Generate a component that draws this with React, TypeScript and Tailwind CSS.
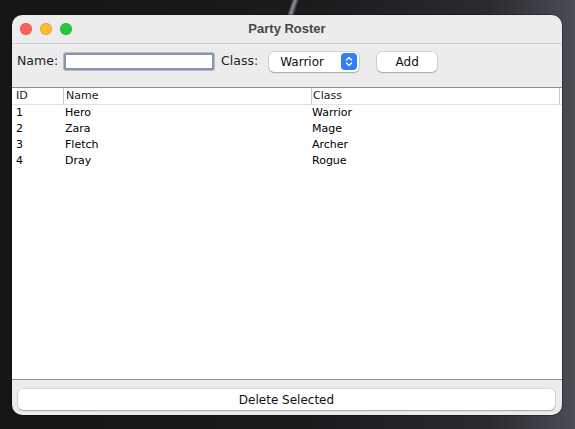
import React from "react";

type Member = {
	id: number;
	name: string;
	cls: string;
};

const MEMBERS: Member[] = [
	{ id: 1, name: "Hero", cls: "Warrior" },
	{ id: 2, name: "Zara", cls: "Mage" },
	{ id: 3, name: "Fletch", cls: "Archer" },
	{ id: 4, name: "Dray", cls: "Rogue" },
];

const SWING_FONT = { fontFamily: '"DejaVu Sans", "Noto Sans", sans-serif' };
const TITLE_FONT = { fontFamily: '"Liberation Sans", Arial, sans-serif' };

function TrafficLights() {
	return (
		<div className="flex items-center gap-[8px] pl-[8px]">
			<span className="block h-[12px] w-[12px] rounded-full bg-[#fe5f57] shadow-[inset_0_0_0_0.5px_rgba(0,0,0,0.2)]" />
			<span className="block h-[12px] w-[12px] rounded-full bg-[#febc2e] shadow-[inset_0_0_0_0.5px_rgba(0,0,0,0.2)]" />
			<span className="block h-[12px] w-[12px] rounded-full bg-[#28c840] shadow-[inset_0_0_0_0.5px_rgba(0,0,0,0.2)]" />
		</div>
	);
}

function ComboArrows() {
	return (
		<svg width="8" height="11" viewBox="0 0 8 11" fill="none">
			<path d="M1.5 4 L4 1.5 L6.5 4" stroke="white" strokeWidth="1.4" strokeLinecap="round" strokeLinejoin="round" />
			<path d="M1.5 7 L4 9.5 L6.5 7" stroke="white" strokeWidth="1.4" strokeLinecap="round" strokeLinejoin="round" />
		</svg>
	);
}

export default function App() {
	return (
		<div className="min-h-screen w-full pt-[15px] pl-[12px] pb-[14px] bg-no-repeat bg-[length:100%_15px,100%_100%] bg-[linear-gradient(108deg,transparent_50.3%,rgba(200,200,210,0.7)_50.9%,transparent_51.6%),linear-gradient(90deg,#151517_0%,#1b1b1e_55%,#2a2b30_85%,#4b4d55_100%)]">
			<div
				className="flex h-[400px] w-[550px] flex-col overflow-hidden rounded-[10px] bg-[#ececec] shadow-[0_0_0_0.5px_rgba(0,0,0,0.6)]"
				style={SWING_FONT}
			>
				{/* Title bar */}
				<div className="grid h-[29px] shrink-0 grid-cols-[1fr_auto_1fr] items-center border-b border-[#cdcdcd]">
					<TrafficLights />
					<span className="text-[13px] font-bold text-[#474747]" style={TITLE_FONT}>
						Party Roster
					</span>
					<span />
				</div>

				{/* Input row */}
				<div className="flex h-[43px] shrink-0 items-start pt-[7px] pl-[5px] text-[12.5px] text-[#1e1e1e]">
					<div className="flex h-[21px] items-center">
						<span>Name:</span>
						<div className="ml-[6px] h-[17px] w-[150px] rounded-[2px] border-2 border-[#8595aa] bg-white ring-1 ring-[#b0bccb]" />
						<span className="ml-[7px]">Class:</span>
						<div className="ml-[11px] flex h-[20px] w-[90px] items-center justify-between rounded-[5px] bg-white pl-[11px] pr-[2px] shadow-[0_0_0_0.5px_rgba(0,0,0,0.18),0_1px_1.5px_rgba(0,0,0,0.22)]">
							<span className="text-[12px] text-[#111]">Warrior</span>
							<span className="flex h-[17px] w-[16px] items-center justify-center rounded-[4px] bg-[#2f7ff7]">
								<ComboArrows />
							</span>
						</div>
						<button className="ml-[18px] flex h-[20px] w-[60px] items-center justify-center rounded-[5px] bg-white text-[12px] text-[#111] shadow-[0_0_0_0.5px_rgba(0,0,0,0.18),0_1px_1.5px_rgba(0,0,0,0.22)]">
							Add
						</button>
					</div>
				</div>

				{/* Table */}
				<div className="flex-1 border-y border-[#8f8f8f] bg-white text-[11px] text-black">
					<div className="grid h-[17px] grid-cols-[51px_248px_248px_1fr] items-center border-b border-[#e2e2e2] text-[#1a1a1a]">
						<span className="pl-[4px]">ID</span>
						<span className="h-full border-l border-[#cbcbcb] pl-[2px] leading-[16px]">Name</span>
						<span className="h-full border-l border-[#cbcbcb] pl-[1px] leading-[16px]">Class</span>
						<span className="h-full border-l border-[#cbcbcb]" />
					</div>
					{MEMBERS.map((m) => (
						<div key={m.id} className="grid h-[16px] grid-cols-[51px_248px_248px_1fr] items-center">
							<span className="pl-[4px]">{m.id}</span>
							<span className="pl-[2px]">{m.name}</span>
							<span className="pl-[1px]">{m.cls}</span>
							<span />
						</div>
					))}
				</div>

				{/* Bottom */}
				<div className="h-[35px] shrink-0 pt-[9px] pl-[6px] pr-[7px]">
					<button className="flex h-[21px] w-full items-center justify-center rounded-[5px] bg-white text-[12px] text-[#111] shadow-[0_0_0_0.5px_rgba(0,0,0,0.15),0_1px_1.5px_rgba(0,0,0,0.25)]">
						Delete Selected
					</button>
				</div>
			</div>
		</div>
	);
}
